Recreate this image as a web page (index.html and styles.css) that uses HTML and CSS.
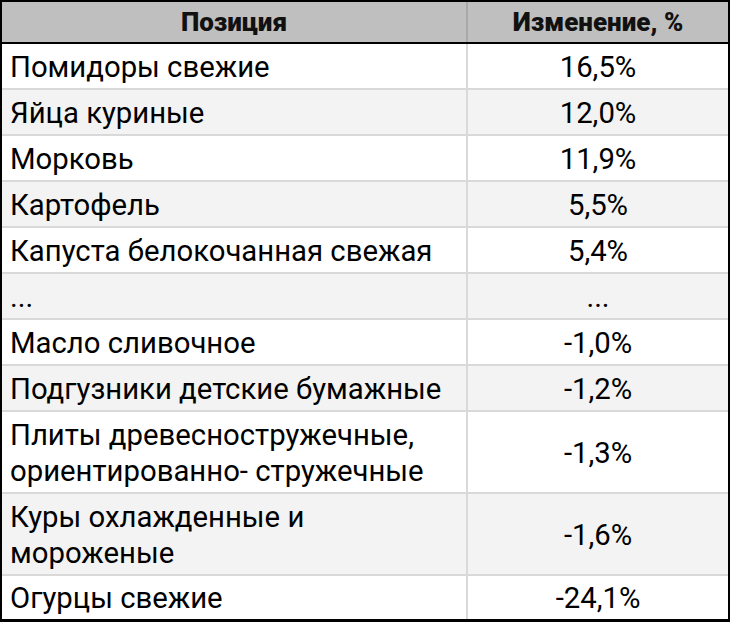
FILE: index.html
```html
<!DOCTYPE html>
<html lang="ru">
<head>
<meta charset="utf-8">
<link rel="stylesheet" href="styles.css">
</head>
<body>
<div class="table">
  <div class="row head">
    <div class="cell">Позиция</div>
    <div class="cell num">Изменение, %</div>
  </div>
  <div class="rows">
    <div class="row"><div class="cell">Помидоры свежие</div><div class="cell num">16,5%</div></div>
    <div class="row alt"><div class="cell">Яйца куриные</div><div class="cell num">12,0%</div></div>
    <div class="row"><div class="cell">Морковь</div><div class="cell num">11,9%</div></div>
    <div class="row alt"><div class="cell">Картофель</div><div class="cell num">5,5%</div></div>
    <div class="row"><div class="cell">Капуста белокочанная свежая</div><div class="cell num">5,4%</div></div>
    <div class="row alt"><div class="cell">...</div><div class="cell num">...</div></div>
    <div class="row"><div class="cell">Масло сливочное</div><div class="cell num">-1,0%</div></div>
    <div class="row alt"><div class="cell">Подгузники детские бумажные</div><div class="cell num">-1,2%</div></div>
    <div class="row tall"><div class="cell">Плиты древесностружечные, ориентированно- стружечные</div><div class="cell num">-1,3%</div></div>
    <div class="row alt tall"><div class="cell">Куры охлажденные и мороженые</div><div class="cell num">-1,6%</div></div>
    <div class="row last"><div class="cell">Огурцы свежие</div><div class="cell num">-24,1%</div></div>
  </div>
</div>
</body>
</html>
```

FILE: styles.css
```css
html, body {
  margin: 0;
  padding: 0;
  background: #fff;
}
body {
  width: 730px;
  height: 622px;
  overflow: hidden;
  font-family: Roboto, "Liberation Sans", sans-serif;
  color: #000;
}
.table {
  width: 730px;
  height: 622px;
  box-sizing: border-box;
  border: 2px solid #000;
  border-bottom-width: 3px;
  display: flex;
  flex-direction: column;
  background: #fff;
}
.row {
  display: grid;
  grid-template-columns: 464px 260px;
  column-gap: 2px;
  background: #d9d9d9;
}
.head {
  height: 40px;
  flex: none;
  border-bottom: 2px solid #000;
  background: #a8a8a8;
  font-weight: 900;
  font-size: 26px;
  line-height: 30px;
  color: #111;
}
.head .cell {
  background: #bfbfbf;
  padding: 0;
}
.rows {
  flex: 1;
  display: flex;
  flex-direction: column;
  row-gap: 2px;
  background: #d9d9d9;
}
.rows .row {
  height: 44px;
  flex: none;
  font-size: 29.3px;
  line-height: 36px;
}
.rows .row.tall {
  height: 80px;
}
.rows .row.last {
  height: 43px;
}
.cell {
  background: #fff;
  display: flex;
  align-items: center;
  padding: 1px 8px 0 8px;
}
.alt .cell {
  background: #f3f3f3;
}
.num, .head .cell {
  justify-content: center;
  text-align: center;
}
```
